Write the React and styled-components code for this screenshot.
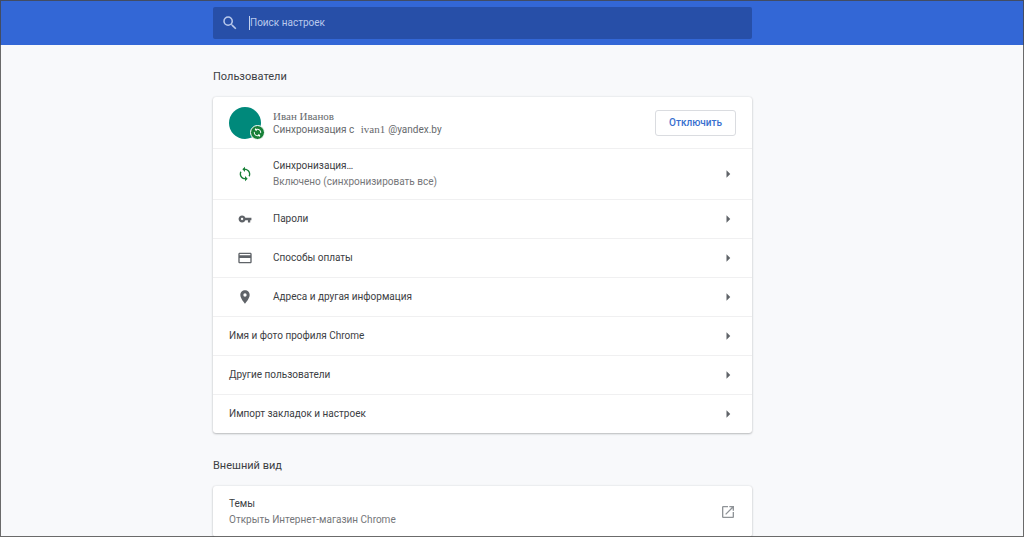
import React from 'react';
import styled, { createGlobalStyle } from 'styled-components';
import {
  MdSearch,
  MdSync,
  MdVpnKey,
  MdCreditCard,
  MdPlace,
  MdArrowRight,
  MdOpenInNew,
} from 'react-icons/md';

const GlobalStyle = createGlobalStyle`
  *, *::before, *::after { box-sizing: border-box; }
  body {
    margin: 0;
    background: #f8f9fb;
    color: #3c4043;
    font: 10px/16px Roboto, "Liberation Sans", sans-serif;
  }
  button, input { font: inherit; }
`;

const Page = styled.div`
  position: relative;
  height: 100vh;
  display: flex;
  flex-direction: column;
  overflow: hidden;

  &::after {
    content: '';
    position: absolute;
    inset: 0;
    border: 1px solid rgba(70, 70, 70, 0.8);
    pointer-events: none;
  }
`;

const Columns = styled.div`
  display: grid;
  grid-template-columns: minmax(0, 213fr) minmax(0, 539px) minmax(0, 272fr);

  & > * { grid-column: 2; }
`;

const Header = styled.header`
  flex: none;
  padding: 7px 0 6px;
  background: #3367d6;
`;

const SearchBox = styled.label`
  display: flex;
  align-items: center;
  gap: 10px;
  height: 32px;
  padding: 0 8px;
  border-radius: 2px;
  background: #274fa8;
  color: #b9c9ec;
`;

const SearchInput = styled.input`
  flex: 1;
  min-width: 0;
  height: 14px;
  padding: 0;
  border: 0;
  border-left: 1px solid #c5d2ef;
  outline: 0;
  background: none;
  color: #fff;

  &::placeholder { color: #b9c9ec; opacity: 1; }
`;

const Content = styled.main`
  flex: 1;
  min-height: 0;
  overflow-y: auto;
  scrollbar-width: none;
`;

const SectionTitle = styled.h2`
  margin: 0;
  padding: 23px 0 12px;
  font-size: 11px;
  font-weight: 400;
  line-height: 17px;
`;

const Card = styled.section`
  margin-bottom: 1px;
  border-radius: 3px;
  background: #fff;
  box-shadow: 0 1px 2px rgba(60, 64, 67, 0.3), 0 0 2px rgba(60, 64, 67, 0.15);
`;

const Row = styled.div`
  display: flex;
  align-items: center;
  width: 100%;
  min-height: ${(p) => (p.$tall ? 51 : 39)}px;
  padding: 0 16px;
  border: 0;
  border-top: 1px solid #f0f0f1;
  background: none;
  color: inherit;
  text-align: left;
  text-decoration: none;

  &:first-child { border-top: 0; }
`;

const Leading = styled.span`
  display: flex;
  flex: none;
  justify-content: center;
  width: 32px;
  margin-right: 12px;
  color: ${(p) => p.$color || '#5f6368'};
`;

const Texts = styled.span`
  flex: 1;
  min-width: 0;
  display: flex;
  flex-direction: column;
`;

const Secondary = styled.span`
  color: #757679;
`;

const AccountTexts = styled(Texts)`
  padding-top: 1px;
  color: #66696c;
  line-height: 13px;
`;

const Serif = styled.span`
  font-family: "Liberation Serif", serif;
  font-size: 11px;
`;

const AccountName = styled(Serif)`
  margin: 0 3px 0 4px;
`;

const Trailing = styled.span`
  display: flex;
  flex: none;
  justify-content: center;
  width: 16px;
  color: ${(p) => p.$color || '#5f6368'};

  svg { flex: none; }
`;

const Avatar = styled.span`
  position: relative;
  flex: none;
  width: 32px;
  height: 32px;
  margin-right: 12px;
  border-radius: 50%;
  background: #00897b;
`;

const Badge = styled.span`
  position: absolute;
  right: -4px;
  bottom: -1px;
  display: flex;
  align-items: center;
  justify-content: center;
  width: 15px;
  height: 15px;
  border: 1px solid #fff;
  border-radius: 50%;
  background: #188038;
  color: #fff;

  svg { transform: rotate(-20deg); }
`;

const OutlineButton = styled.button`
  flex: none;
  height: 26px;
  padding: 0 13px;
  border: 1px solid #dadce0;
  border-radius: 3px;
  background: #fff;
  color: #3870cf;
  font-weight: 500;
`;

function LinkRow({ icon: Icon, size = 16, color, title, detail, external }) {
  return (
    <Row as={external ? 'a' : 'button'} href={external ? '#themes' : undefined} $tall={Boolean(detail)}>
      {Icon && (
        <Leading $color={color}>
          <Icon size={size} />
        </Leading>
      )}
      <Texts>
        <span>{title}</span>
        {detail && <Secondary>{detail}</Secondary>}
      </Texts>
      <Trailing $color={external && '#8f9397'}>
        {external ? <MdOpenInNew size={16} /> : <MdArrowRight size={18} />}
      </Trailing>
    </Row>
  );
}

export default function App() {
  return (
    <>
      <GlobalStyle />
      <Page>
        <Header>
          <Columns>
            <SearchBox>
              <MdSearch size={18} />
              <SearchInput type="text" placeholder="Поиск настроек" aria-label="Поиск настроек" />
            </SearchBox>
          </Columns>
        </Header>
        <Content>
          <Columns>
            <SectionTitle>Пользователи</SectionTitle>
            <Card>
              <Row $tall>
                <Avatar>
                  <Badge>
                    <MdSync size={11} />
                  </Badge>
                </Avatar>
                <AccountTexts>
                  <Serif>Иван Иванов</Serif>
                  <span>
                    Синхронизация с <AccountName>ivan1</AccountName>@yandex.by
                  </span>
                </AccountTexts>
                <OutlineButton type="button">Отключить</OutlineButton>
              </Row>
              <LinkRow
                icon={MdSync}
                color="#188038"
                title="Синхронизация…"
                detail="Включено (синхронизировать все)"
              />
              <LinkRow icon={MdVpnKey} size={14} title="Пароли" />
              <LinkRow icon={MdCreditCard} title="Способы оплаты" />
              <LinkRow icon={MdPlace} title="Адреса и другая информация" />
              <LinkRow title="Имя и фото профиля Chrome" />
              <LinkRow title="Другие пользователи" />
              <LinkRow title="Импорт закладок и настроек" />
            </Card>
            <SectionTitle>Внешний вид</SectionTitle>
            <Card>
              <LinkRow title="Темы" detail="Открыть Интернет-магазин Chrome" external />
            </Card>
          </Columns>
        </Content>
      </Page>
    </>
  );
}
